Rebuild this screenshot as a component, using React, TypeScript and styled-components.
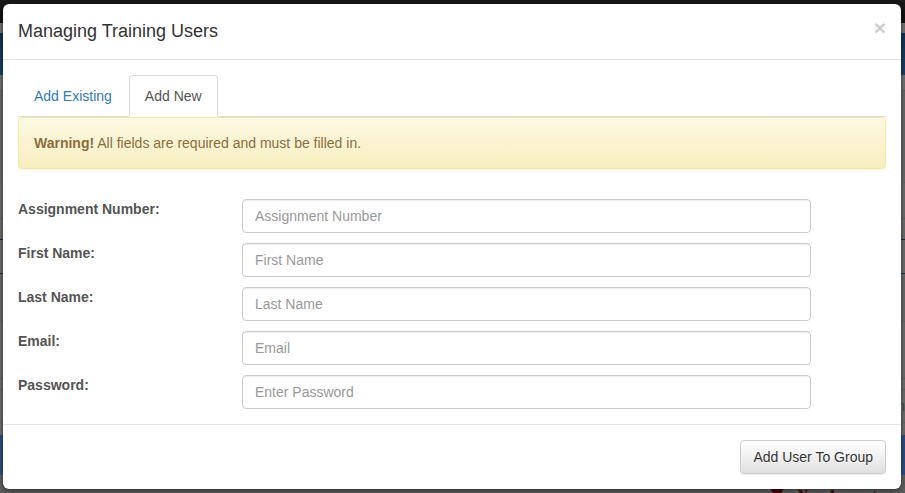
import React from "react";
import styled, { createGlobalStyle } from "styled-components";

const GlobalStyle = createGlobalStyle`
  *, *::before, *::after { box-sizing: border-box; }
  body {
    margin: 0;
    overflow: hidden;
    background: #5e5e5e;
    color: #555;
    font: 14px/20px "Liberation Sans", Arial, sans-serif;
  }
  input, button { font: inherit; }
`;

const Screen = styled.div`
  position: relative;
  height: 100vh;
  overflow: hidden;
`;

const Backdrop = styled.div`
  display: flex;
  flex-direction: column;
  min-height: 100%;
`;

const Band = styled.div<{ $height: number; $fill: string; $line?: string }>`
  flex: none;
  height: ${(p) => p.$height}px;
  padding-top: 6px;
  background: ${(p) => p.$fill};
  border-bottom: ${(p) => (p.$line ? `1px solid ${p.$line}` : "0")};
  color: #3c4450;
  text-align: right;
`;

const PageFooter = styled.div`
  display: flex;
  flex: none;
  justify-content: flex-end;
  gap: 15px;
  height: 40px;
  padding: 11px 28px 0 0;
  background: #5c5c5c;
  color: #450008;
  font: bold 14px/20px "Liberation Serif", serif;
`;

const Dialog = styled.section`
  position: absolute;
  inset: 4px 4px auto 3px;
  background: #fff;
  border-radius: 6px;
  box-shadow: 0 2px 5px rgba(0, 0, 0, 0.4), 0 0 1px rgba(0, 0, 0, 0.6);
`;

const Header = styled.header`
  display: flex;
  justify-content: space-between;
  align-items: flex-start;
  padding: 15px;
  border-bottom: 1px solid #e5e5e5;
`;

const Title = styled.h4`
  margin: 0;
  color: #333;
  font-size: 18px;
  font-weight: 400;
  line-height: 25px;
`;

const CloseButton = styled.button`
  margin: -2px 0 0;
  padding: 0;
  border: 0;
  background: none;
  color: #ccc;
  font-size: 21px;
  font-weight: 700;
  line-height: 21px;
  cursor: pointer;
`;

const Body = styled.div`
  padding: 15px;
`;

const Tabs = styled.nav`
  display: flex;
  gap: 1px;
  border-bottom: 1px solid #ddd;
`;

const Tab = styled.a<{ $active?: boolean }>`
  margin-bottom: -1px;
  padding: 10px 15px;
  border: 1px solid ${(p) => (p.$active ? "#ddd" : "transparent")};
  border-bottom-color: ${(p) => (p.$active ? "#fff" : "transparent")};
  border-radius: 4px 4px 0 0;
  color: ${(p) => (p.$active ? "#555" : "#337ab7")};
  text-decoration: none;
`;

const Warning = styled.div`
  margin-bottom: 30px;
  padding: 15px;
  border: 1px solid #f5e79e;
  border-radius: 4px;
  background: linear-gradient(#fcf8e3, #f8efc0);
  box-shadow: inset 0 1px 0 rgba(255, 255, 255, 0.25), 0 1px 2px rgba(0, 0, 0, 0.05);
  color: #8a6d3b;
  text-shadow: 0 1px 0 rgba(255, 255, 255, 0.2);
`;

const Form = styled.form`
  display: grid;
  gap: 10px;
`;

const Field = styled.div`
  display: grid;
  grid-template-columns: 216fr 569fr;
  column-gap: 8px;
  align-items: start;
  padding-right: 75px;
`;

const Label = styled.label`
  font-weight: 700;
`;

const TextInput = styled.input`
  width: 100%;
  height: 34px;
  padding: 6px 12px;
  border: 1px solid #ccc;
  border-radius: 4px;
  background: #fff;
  box-shadow: inset 0 1px 1px rgba(0, 0, 0, 0.075);
  color: #555;
  &::placeholder { color: #999; opacity: 1; }
`;

const Footer = styled.footer`
  display: flex;
  justify-content: flex-end;
  padding: 15px;
  border-top: 1px solid #e5e5e5;
`;

const SubmitButton = styled.button`
  height: 34px;
  padding: 6px 12px;
  border: 1px solid #ccc;
  border-radius: 4px;
  background: linear-gradient(#fff, #e0e0e0);
  box-shadow: inset 0 1px 0 rgba(255, 255, 255, 0.15), 0 1px 1px rgba(0, 0, 0, 0.075);
  color: #333;
  line-height: 20px;
  text-shadow: 0 1px 0 #fff;
  cursor: pointer;
`;

type BandData = { height: number; fill: string; line?: string; text?: string };

const bands: BandData[] = [
  { height: 23, fill: "linear-gradient(#191919, #101010)" },
  { height: 10, fill: "#6c6c6c" },
  { height: 42, fill: "linear-gradient(#12304f, #143f68)" },
  { height: 16, fill: "#6c6c6c", line: "#5a5a5a" },
  { height: 92, fill: "#656565", line: "#595b5e" },
  { height: 36, fill: "#686868", line: "#595b5e" },
  { height: 21, fill: "#686868", line: "#14284a" },
  { height: 34, fill: "#686868", line: "#26303f" },
  { height: 48, fill: "#666", line: "#595b5e" },
  { height: 57, fill: "#686868", line: "#595b5e" },
  { height: 11, fill: "#686868", line: "#595b5e" },
  { height: 33, fill: "#686868", line: "#595b5e", text: "n" },
  { height: 12, fill: "#686868" },
  { height: 40, fill: "#2b4a80" },
];

const fields = [
  { id: "assignment", label: "Assignment Number:", placeholder: "Assignment Number", type: "text" },
  { id: "first-name", label: "First Name:", placeholder: "First Name", type: "text" },
  { id: "last-name", label: "Last Name:", placeholder: "Last Name", type: "text" },
  { id: "email", label: "Email:", placeholder: "Email", type: "email" },
  { id: "password", label: "Password:", placeholder: "Enter Password", type: "password" },
];

export default function App() {
  return (
    <Screen>
      <GlobalStyle />
      <Backdrop aria-hidden="true">
        {bands.map((band, i) => (
          <Band key={i} $height={band.height} $fill={band.fill} $line={band.line}>
            {band.text}
          </Band>
        ))}
        <PageFooter>
          <svg width="12" height="20" viewBox="0 0 12 20">
            <path d="M0 3C1 1 4 1 6 3 8 1 11 1 12 3 12 6 9 8 6 11 3 8 0 6 0 3Z" fill="currentColor" />
          </svg>
          New Account
        </PageFooter>
      </Backdrop>
      <Dialog role="dialog" aria-labelledby="dialog-title">
        <Header>
          <Title id="dialog-title">Managing Training Users</Title>
          <CloseButton type="button" aria-label="Close">×</CloseButton>
        </Header>
        <Body>
          <Tabs>
            <Tab href="#existing">Add Existing</Tab>
            <Tab href="#new" $active aria-current="page">Add New</Tab>
          </Tabs>
          <Warning role="alert">
            <strong>Warning!</strong> All fields are required and must be filled in.
          </Warning>
          <Form id="new-user">
            {fields.map((f) => (
              <Field key={f.id}>
                <Label htmlFor={f.id}>{f.label}</Label>
                <TextInput id={f.id} type={f.type} placeholder={f.placeholder} />
              </Field>
            ))}
          </Form>
        </Body>
        <Footer>
          <SubmitButton type="submit" form="new-user">Add User To Group</SubmitButton>
        </Footer>
      </Dialog>
    </Screen>
  );
}
